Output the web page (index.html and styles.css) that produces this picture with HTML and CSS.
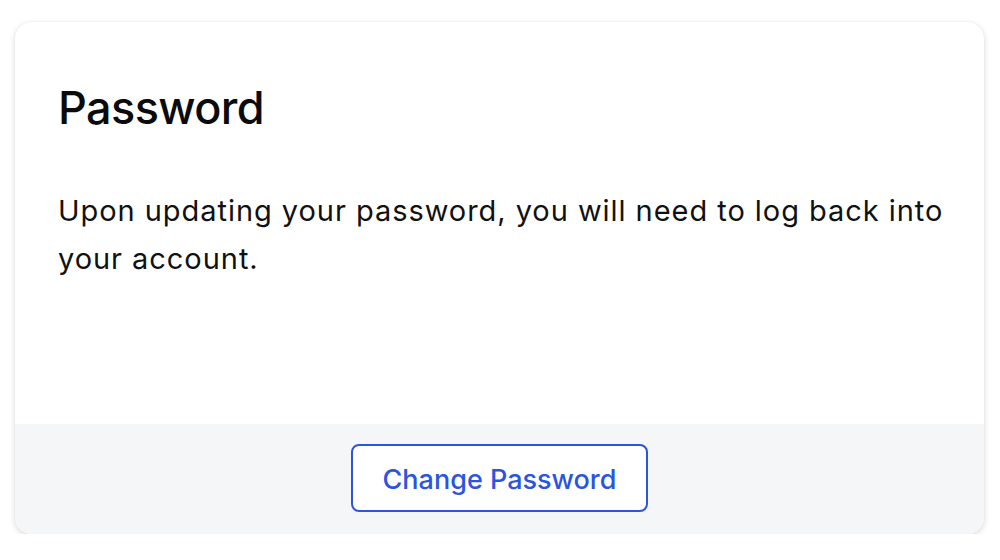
FILE: index.html
```html
<!DOCTYPE html>
<html>
<head>
<meta charset="utf-8">
<link rel="stylesheet" href="styles.css">
</head>
<body>
<div class="card">
  <div class="card-body">
    <h1 class="title">Password</h1>
    <p class="desc">Upon updating your password, you will need to log back into your account.</p>
  </div>
  <div class="card-footer">
    <button class="btn">Change Password</button>
  </div>
</div>
</body>
</html>
```
FILE: styles.css
```css
html, body {
  margin: 0;
  padding: 0;
  background: #ffffff;
}
body {
  padding: 22px 16px 0 15px;
  font-family: "Inter", "Lato", sans-serif;
}
.card {
  width: 969px;
  height: 512px;
  border-radius: 16px;
  background: #ffffff;
  box-shadow: 0 2px 6px rgba(0,0,0,0.14), 0 0 1px rgba(0,0,0,0.12);
  display: flex;
  flex-direction: column;
  overflow: hidden;
}
.card-body {
  flex: 1;
  padding: 61px 20px 0 43px;
}
.title {
  margin: 0;
  font-size: 45px;
  font-weight: 500;
  color: #0b0b0b;
  line-height: 50px;
  letter-spacing: -0.6px;
}
.desc {
  margin: 54px 0 0 0;
  font-size: 29px;
  line-height: 48px;
  color: #111111;
  letter-spacing: 0.95px;
  max-width: 900px;
}
.card-footer {
  height: 110px;
  background: #f5f6f8;
  display: flex;
  justify-content: center;
  padding-top: 20px;
  box-sizing: border-box;
}
.btn {
  width: 297px;
  height: 68px;
  border: 2px solid #2b55e0;
  border-radius: 8px;
  background: #ffffff;
  color: #2b55e0;
  font-family: "Inter", "Lato", sans-serif;
  font-size: 27px;
  font-weight: 500;
  padding: 2px 0 0 0;
  cursor: pointer;
}
```
